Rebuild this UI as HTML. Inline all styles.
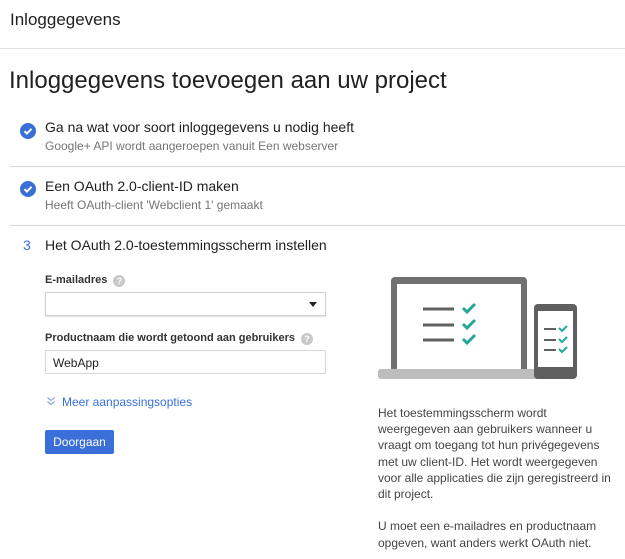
<!DOCTYPE html>
<html><head><meta charset="utf-8"><style>
*{margin:0;padding:0;box-sizing:border-box}
body{width:625px;height:559px;background:#fff;font-family:"Liberation Sans",Arial,sans-serif;color:#212121;position:relative;overflow:hidden}
.a{position:absolute;white-space:nowrap}
.hr{position:absolute;height:1px;background:#d6d6d6}
.chk{position:absolute;width:16px;height:16px;border-radius:50%;background:#3b6fd8}
.t{font-size:14px;color:#212121}
.s{font-size:12px;color:#757575}
.lbl{font-size:11px;font-weight:bold;color:#333}
.q{display:inline-block;width:12px;height:12px;border-radius:50%;background:#c8c8c8;color:#fff;font-size:9px;text-align:center;line-height:12px;font-weight:bold;margin-left:6px;vertical-align:-1px}
</style></head><body>
<div class="a" style="left:10px;top:10px;font-size:17px">Inloggegevens</div>
<div class="hr" style="left:0;top:48px;width:625px;background:#e0e0e0"></div>
<div class="a" style="left:9px;top:67px;font-size:24px;color:#212121">Inloggegevens toevoegen aan uw project</div>

<div class="chk" style="left:20px;top:123px"><svg width="16" height="16"><path d="M4.5 8.2l2.4 2.4 4.6-4.8" stroke="#fff" stroke-width="2" fill="none"/></svg></div>
<div class="a t" style="left:45px;top:119px">Ga na wat voor soort inloggegevens u nodig heeft</div>
<div class="a s" style="left:45px;top:139px">Google+ API wordt aangeroepen vanuit Een webserver</div>
<div class="hr" style="left:10px;top:166px;width:615px"></div>

<div class="chk" style="left:20px;top:181px"><svg width="16" height="16"><path d="M4.5 8.2l2.4 2.4 4.6-4.8" stroke="#fff" stroke-width="2" fill="none"/></svg></div>
<div class="a t" style="left:45px;top:178px">Een OAuth 2.0-client-ID maken</div>
<div class="a s" style="left:45px;top:198px">Heeft OAuth-client 'Webclient 1' gemaakt</div>
<div class="hr" style="left:10px;top:225px;width:615px"></div>

<div class="a t" style="left:23px;top:237px;color:#3b6fd8">3</div>
<div class="a t" style="left:45px;top:237px">Het OAuth 2.0-toestemmingsscherm instellen</div>

<div class="a lbl" style="left:45px;top:274px">E-mailadres<span class="q">?</span></div>
<div class="a" style="left:45px;top:292px;width:281px;height:24px;border:1px solid #d0d0d0;box-shadow:0 1px 1px rgba(0,0,0,.12)"><div style="position:absolute;right:8px;top:9px;border-left:4px solid transparent;border-right:4px solid transparent;border-top:5px solid #222"></div></div>
<div class="a lbl" style="left:45px;top:332px">Productnaam die wordt getoond aan gebruikers<span class="q">?</span></div>
<div class="a" style="left:45px;top:350px;width:281px;height:24px;border:1px solid #d6d6d6;font-size:12px;padding:5px 0 0 7px">WebApp</div>
<svg class="a" style="left:46px;top:396px" width="10" height="10"><path d="M1.5 1.5l3.5 3 3.5-3M1.5 5.5l3.5 3 3.5-3" stroke="#8aa6e0" stroke-width="1.2" fill="none"/></svg>
<div class="a" style="left:62px;top:395px;font-size:12px;color:#3b6fd8">Meer aanpassingsopties</div>
<div class="a" style="left:45px;top:430px;width:69px;height:24px;background:#3b6fd8;border-radius:2px;color:#fff;font-size:12px;text-align:center;line-height:24px">Doorgaan</div>

<svg class="a" style="left:370px;top:270px" width="230" height="120">
<rect x="21" y="7" width="136" height="96" rx="4" fill="#707070"/>
<rect x="27" y="14" width="124" height="86" fill="#fff"/>
<rect x="8" y="99" width="170" height="10" rx="3" fill="#bdbdbd"/>
<g stroke="#616161" stroke-width="3"><line x1="53" y1="39" x2="84" y2="39"/><line x1="53" y1="55" x2="84" y2="55"/><line x1="53" y1="70" x2="84" y2="70"/></g>
<g stroke="#26a69a" stroke-width="3" fill="none"><path d="M93 38l4 4 8-8"/><path d="M93 54l4 4 8-8"/><path d="M93 69l4 4 8-8"/></g>
<rect x="164" y="34" width="43" height="75" rx="4" fill="#5f5f5f"/>
<rect x="168" y="41" width="35" height="56" fill="#fff"/>
<g stroke="#616161" stroke-width="2"><line x1="174" y1="59" x2="186" y2="59"/><line x1="174" y1="70" x2="186" y2="70"/><line x1="174" y1="80" x2="186" y2="80"/></g>
<g stroke="#26a69a" stroke-width="2" fill="none"><path d="M189 58l3 3 5-5"/><path d="M189 69l3 3 5-5"/><path d="M189 79l3 3 5-5"/></g>
</svg>

<div class="a" style="left:378px;top:405px;font-size:12px;line-height:16.2px;color:#444;white-space:normal;width:239px">Het toestemmingsscherm wordt weergegeven aan gebruikers wanneer u vraagt om toegang tot hun privégegevens met uw client-ID. Het wordt weergegeven voor alle applicaties die zijn geregistreerd in dit project.<br><br>U moet een e-mailadres en productnaam opgeven, want anders werkt OAuth niet.</div>
</body></html>
